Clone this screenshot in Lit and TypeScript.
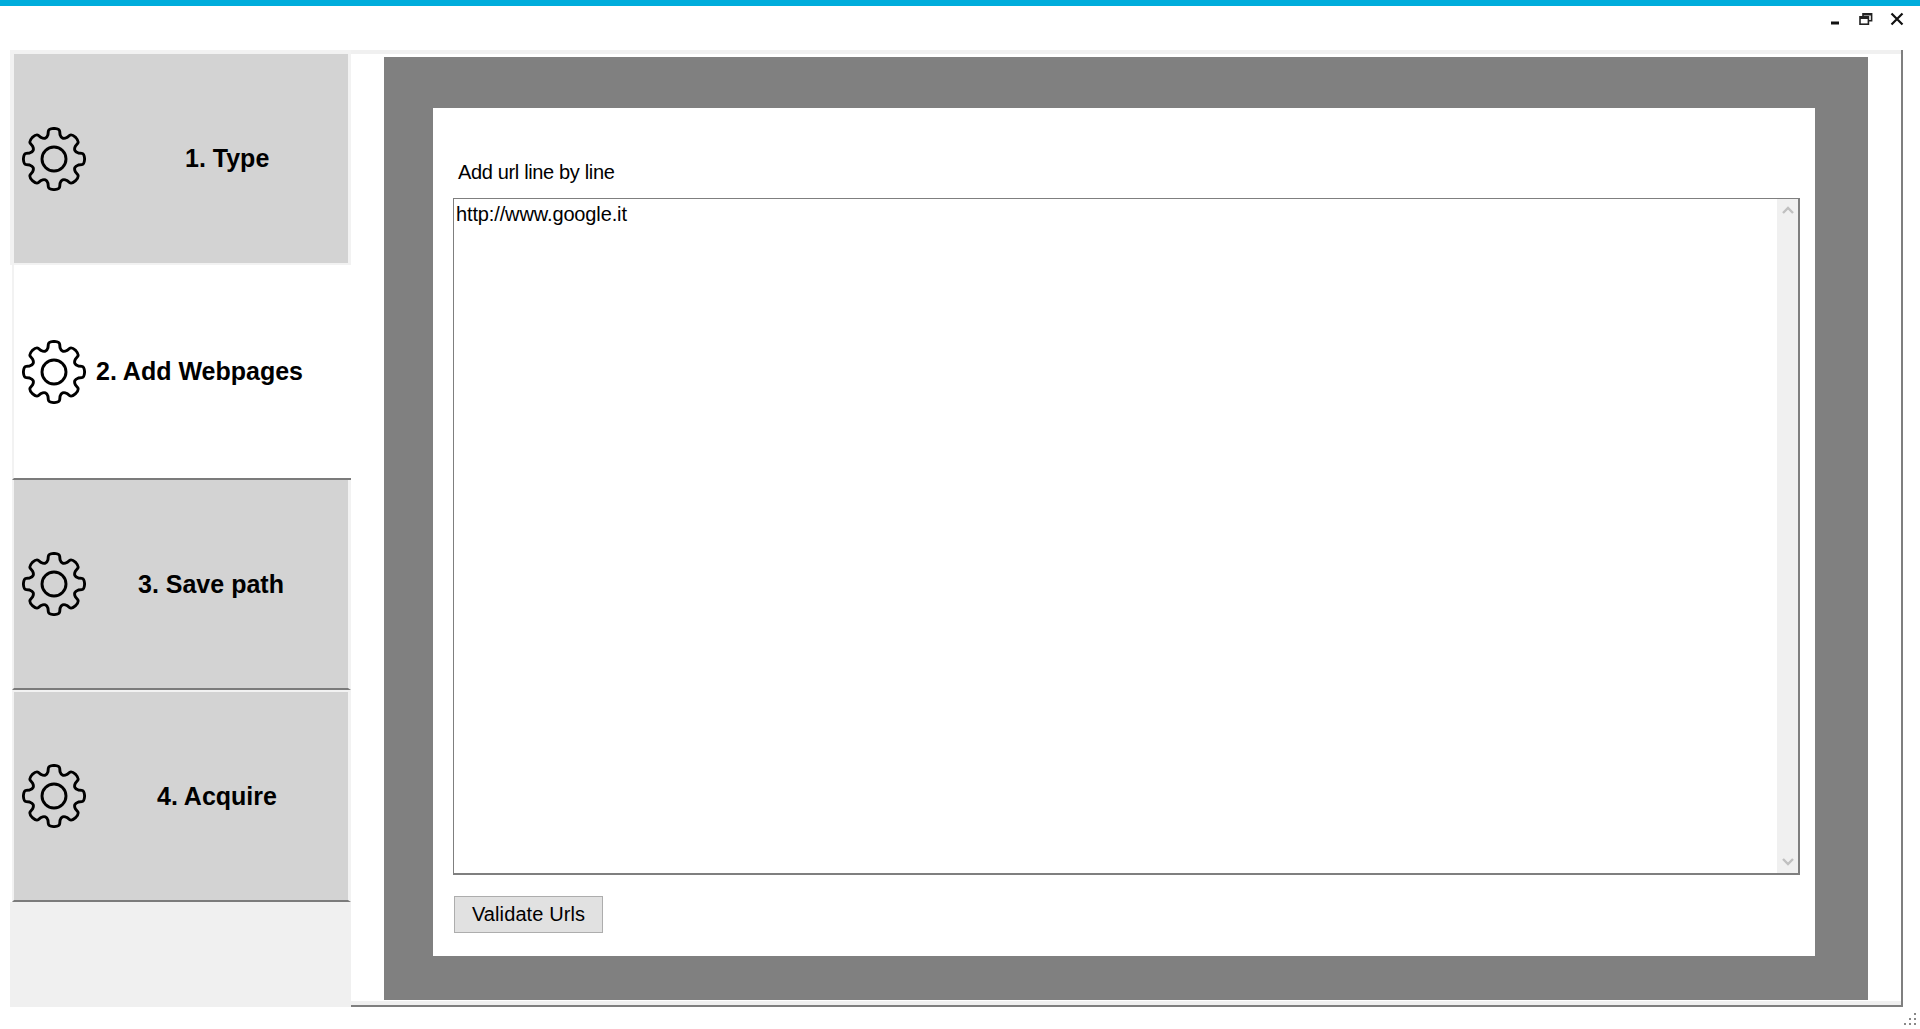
import { LitElement, html, css, svg } from 'lit';
import { customElement } from 'lit/decorators.js';

// eight-tooth cog outline, same for every tab
function gearPath(): string {
  const c = 32;
  const pt = (r: number, deg: number) => {
    const a = ((deg - 90) * Math.PI) / 180;
    return `${(c + r * Math.cos(a)).toFixed(2)} ${(c + r * Math.sin(a)).toFixed(2)}`;
  };
  let d = '';
  for (let i = 0; i < 8; i++) {
    const t = i * 45;
    d += `${i === 0 ? 'M' : 'L'}${pt(25, t - 14)} `;
    d += `L${pt(28.4, t - 11.5)} Q${pt(30.8, t - 10)} ${pt(30.6, t)} Q${pt(30.8, t + 10)} ${pt(28.4, t + 11.5)} `;
    d += `L${pt(25, t + 14)} Q${pt(20.4, t + 22.5)} ${pt(25, t + 31)} `;
  }
  return d + 'Z';
}

const GEAR = gearPath();

const STEPS = [
  { label: '1. Type', pad: 99 },
  { label: '2. Add Webpages', pad: 10, active: true },
  { label: '3. Save path', pad: 52 },
  { label: '4. Acquire', pad: 71 },
];

@customElement('app-root')
export class AppRoot extends LitElement {
  static styles = css`
    :host {
      display: flex;
      flex-direction: column;
      width: 1920px;
      height: 1029px;
      background: #fff;
      font-family: 'Liberation Sans', Arial, sans-serif;
      color: #000;
      overflow: hidden;
    }

    .accent {
      height: 6px;
      background: #00addc;
    }

    .controls {
      height: 44px;
      display: flex;
      justify-content: flex-end;
      align-items: flex-start;
      padding: 6px 16px 0 0;
      box-sizing: border-box;
      gap: 17px;
    }

    .controls svg {
      display: block;
    }

    .controls .min {
      margin-right: 1px;
    }

    .main {
      height: 957px;
      display: flex;
      padding-left: 10px;
    }

    .sidebar {
      width: 341px;
      display: flex;
      flex-direction: column;
    }

    .step {
      height: 215px;
      box-sizing: border-box;
      display: flex;
      align-items: center;
      background: #d3d3d3;
      border: solid #f2f2f2;
      border-width: 4px 3px 2px 4px;
      padding-left: 8px;
      font-size: 25px;
      font-weight: 700;
    }

    .step svg {
      flex: none;
      width: 64px;
      height: 64px;
    }

    .step.active {
      background: #fff;
      margin-left: 2px;
      border-width: 0 0 2px 2px;
      border-color: #f2f2f2 #f2f2f2 #7b7b7b #f2f2f2;
    }

    .step.line {
      margin-left: 2px;
      border-width: 0 3px 2px 2px;
      border-bottom-color: #7b7b7b;
      height: 210px;
    }

    .step.first {
      border-bottom-color: #f2f2f2;
    }

    .step.last {
      height: 212px;
      border-top-width: 2px;
    }

    .spacer {
      flex: 1;
      background: #f0f0f0;
    }

    .panel {
      flex: none;
      width: 1552px;
      box-sizing: border-box;
      display: flex;
      border-right: 2px solid #7f7f7f;
      border-bottom: 2px solid #7f7f7f;
    }

    .panel-inner {
      flex: 1;
      display: flex;
      border: solid #f0f0f0;
      border-width: 4px 0 4px 0;
      padding: 3px 33px 1px 33px;
    }

    .stage {
      flex: 1;
      background: #808080;
      padding: 51px 53px 44px 49px;
      display: flex;
    }

    .card {
      flex: 1;
      background: #fff;
      display: flex;
      flex-direction: column;
      padding: 0 15px 23px 20px;
    }

    .label {
      font-size: 20px;
      line-height: 24px;
      letter-spacing: -0.35px;
      margin: 52px 0 0 5px;
      height: 38px;
    }

    .urls {
      flex: 1;
      display: flex;
      border: 1px solid #7f7f7f;
      border-width: 1px 2px 2px 1px;
      min-height: 0;
    }

    textarea {
      flex: 1;
      border: 0;
      margin: 0;
      padding: 3px 2px;
      resize: none;
      outline: none;
      overflow: hidden;
      background: #fff;
      color: #000;
      font-family: inherit;
      font-size: 20px;
      line-height: 24px;
      letter-spacing: -0.13px;
    }

    .scrollbar {
      flex: none;
      width: 21px;
      background: #f0f0f0;
      display: flex;
      flex-direction: column;
      justify-content: space-between;
      align-items: center;
      padding: 7px 0;
    }

    .scrollbar svg {
      display: block;
    }

    .validate {
      align-self: flex-start;
      width: 149px;
      height: 37px;
      margin: 21px 0 0 1px;
      padding: 0;
      background: #e1e1e1;
      border: 1px solid #adadad;
      color: #000;
      font-family: inherit;
      font-size: 20px;
      letter-spacing: 0.1px;
    }

    .grip {
      display: block;
      position: absolute;
      right: 4px;
      bottom: 4px;
    }
  `;

  renderGear() {
    return svg`<svg viewBox="0 0 64 64" fill="none" stroke="#000" stroke-width="2.9" stroke-linejoin="round">
      <path d=${GEAR}></path>
      <circle cx="32" cy="32" r="12"></circle>
    </svg>`;
  }

  render() {
    return html`
      <div class="accent"></div>
      <div class="controls">
        <svg class="min" width="12" height="14" viewBox="0 0 12 14"><rect x="2" y="9.5" width="8" height="3" fill="#111"></rect></svg>
        <svg width="14" height="14" viewBox="0 0 14 14" fill="none" stroke="#222" stroke-width="1.6">
          <rect x="1" y="4.8" width="8.4" height="7.4" fill="#fff"></rect>
          <path d="M4 4.5V1.8h8.6v7h-3"></path>
          <path d="M1 6h8.4M4 2.6h8.6" stroke-width="2"></path>
        </svg>
        <svg width="14" height="14" viewBox="0 0 14 14" stroke="#111" stroke-width="2.2"><path d="M1.5 1.5l11 11M12.5 1.5l-11 11"></path></svg>
      </div>
      <div class="main">
        <div class="sidebar">
          ${STEPS.map(
            (s, i) => html`
              <div class="step ${s.active ? 'active' : i === 0 ? 'first' : 'line'} ${i === 3 ? 'last' : ''}">
                ${this.renderGear()}
                <span style="margin-left:${s.pad}px">${s.label}</span>
              </div>
            `,
          )}
          <div class="spacer"></div>
        </div>
        <div class="panel">
          <div class="panel-inner">
            <div class="stage">
              <div class="card">
                <div class="label">Add url line by line</div>
                <div class="urls">
                  <textarea spellcheck="false">http://www.google.it</textarea>
                  <div class="scrollbar">
                    <svg width="12" height="8" viewBox="0 0 12 8" fill="none" stroke="#c0c0c0" stroke-width="2.4"><path d="M1 7l5-5 5 5"></path></svg>
                    <svg width="12" height="8" viewBox="0 0 12 8" fill="none" stroke="#c0c0c0" stroke-width="2.4"><path d="M1 1l5 5 5-5"></path></svg>
                  </div>
                </div>
                <button class="validate">Validate Urls</button>
              </div>
            </div>
          </div>
        </div>
      </div>
      <svg class="grip" width="13" height="13" viewBox="0 0 13 13" fill="#888">
        <rect x="11" y="1" width="2" height="2"></rect>
        <rect x="6" y="6" width="2" height="2"></rect>
        <rect x="11" y="6" width="2" height="2"></rect>
        <rect x="1" y="11" width="2" height="2"></rect>
        <rect x="6" y="11" width="2" height="2"></rect>
        <rect x="11" y="11" width="2" height="2"></rect>
      </svg>
    `;
  }
}
